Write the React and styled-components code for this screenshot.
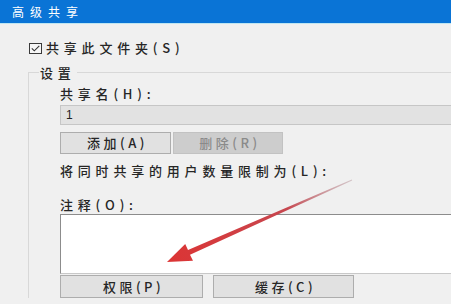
import React from "react";
import styled, { createGlobalStyle } from "styled-components";

const Global = createGlobalStyle`
  html, body { margin: 0; padding: 0; overflow: hidden; background: #f0f0f0; }
  body { font-family: "Noto Sans CJK SC", "Noto Sans", sans-serif; color: #222; }
  * { box-sizing: border-box; }
`;

const Window = styled.div`
  position: relative;
  width: 451px;
  height: 304px;
  overflow: hidden;
  background: #f0f0f0;
  display: flex;
  flex-direction: column;
`;

const TitleBar = styled.div`
  height: 24px;
  flex: none;
  background: #0a74d6;
  border-bottom: 1px solid #bfe6f2;
  color: #fff;
  font-size: 12px;
  letter-spacing: 6px;
  line-height: 23px;
  padding-left: 12px;
`;

const Content = styled.div`
  padding-left: 28px;
  display: flex;
  flex-direction: column;
`;

const Text = styled.span`
  font-size: 13px;
  font-weight: 500;
  letter-spacing: ${(p) => p.$spacing ?? 4.8}px;
  line-height: 16px;
  white-space: nowrap;
  color: ${(p) => (p.$muted ? "#8a8a8a" : "#262626")};
`;

const CheckRow = styled.label`
  margin-top: 16px;
  padding-left: 1px;
  height: 16px;
  display: flex;
  align-items: center;
  gap: 4px;
`;

const Box = styled.span`
  width: 13px;
  height: 11px;
  border: 1px solid #3a3a3a;
  background: #f6f6f6;
  display: flex;
  align-items: center;
  justify-content: center;
`;

const Group = styled.fieldset`
  margin: 7px -20px 0 0;
  padding: 0 0 0 10px;
  border: none;
  border-top: 1px solid #d8d8d8;
  border-left: 1px solid #d8d8d8;
  min-width: 0;
`;

const Legend = styled.legend`
  padding: 0 1px;
  margin: 0;
  line-height: 16px;
`;

const Inner = styled.div`
  padding-left: 21px;
  display: flex;
  flex-direction: column;
`;

const Label = styled.div`
  margin-top: ${(p) => p.$top}px;
  height: 16px;
  display: flex;
  align-items: center;
`;

const Input = styled.div`
  margin-top: 3px;
  height: 20px;
  width: 420px;
  background: #e2e2e2;
  border: 1px solid #c6c6c6;
  padding-left: 5px;
  font-size: 12px;
  line-height: 18px;
  font-family: "Liberation Sans", sans-serif;
`;

const ButtonRow = styled.div`
  margin-top: ${(p) => p.$top}px;
  display: flex;
  gap: ${(p) => p.$gap}px;
`;

const Button = styled.div`
  width: ${(p) => p.$w}px;
  height: ${(p) => p.$h}px;
  background: ${(p) => (p.$disabled ? "#cdcdcd" : "#e1e1e1")};
  border: 1px solid ${(p) => (p.$disabled ? "#c2c2c2" : "#adadad")};
  display: flex;
  align-items: center;
  justify-content: center;
  padding-left: 4px;
`;

const TextArea = styled.div`
  margin-top: 1px;
  height: 60px;
  width: 420px;
  background: #fff;
  border: 1px solid #8c8c8c;
  border-bottom-color: #c8c8c8;
`;

const Overlay = styled.svg`
  position: absolute;
  left: 0;
  top: 0;
  pointer-events: none;
`;

export default function App() {
  return (
    <>
      <Global />
      <Window>
        <TitleBar>高级共享</TitleBar>
        <Content>
          <CheckRow>
            <Box>
              <svg width="9" height="7" viewBox="0 0 9 7">
                <path d="M0.8 3.4 L3.3 5.8 L8.3 0.8" fill="none" stroke="#333" strokeWidth="1.1" />
              </svg>
            </Box>
            <Text>共享此文件夹(S)</Text>
          </CheckRow>
          <Group>
            <Legend>
              <Text>设置</Text>
            </Legend>
            <Inner>
              <Label $top={5}>
                <Text>共享名(H):</Text>
              </Label>
              <Input>1</Input>
              <ButtonRow $top={7} $gap={2}>
                <Button $w={111} $h={22}>
                  <Text $spacing={3.5}>添加(A)</Text>
                </Button>
                <Button $w={110} $h={22} $disabled>
                  <Text $spacing={3.5} $muted>删除(R)</Text>
                </Button>
              </ButtonRow>
              <Label $top={9}>
                <Text>将同时共享的用户数量限制为(L):</Text>
              </Label>
              <Label $top={18}>
                <Text>注释(O):</Text>
              </Label>
              <TextArea />
              <ButtonRow $top={1} $gap={10}>
                <Button $w={143} $h={23}>
                  <Text $spacing={3.5}>权限(P)</Text>
                </Button>
                <Button $w={141} $h={23}>
                  <Text $spacing={3.5}>缓存(C)</Text>
                </Button>
              </ButtonRow>
            </Inner>
          </Group>
        </Content>
        <Overlay width="451" height="304" viewBox="0 0 451 304">
          <defs>
            <linearGradient id="arrowGrad" x1="352" y1="180" x2="167" y2="262" gradientUnits="userSpaceOnUse">
              <stop offset="0" stopColor="#b89aa0" stopOpacity="0.5" />
              <stop offset="0.35" stopColor="#c7474f" />
              <stop offset="1" stopColor="#dc3434" />
            </linearGradient>
          </defs>
          <polygon
            points="352.2,180.5 190,254.7 193,260.8 167,262 185.2,244 188,250.1 351.8,179.5"
            fill="url(#arrowGrad)"
          />
        </Overlay>
      </Window>
    </>
  );
}
